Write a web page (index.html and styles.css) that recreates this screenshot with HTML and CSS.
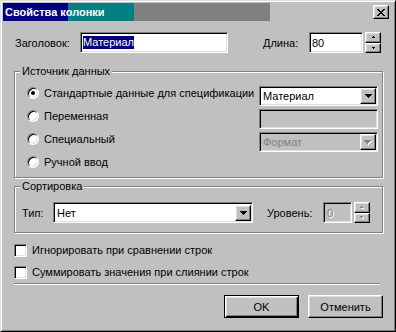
FILE: index.html
```html
<!DOCTYPE html>
<html lang="ru">
<head>
<meta charset="utf-8">
<title>Свойства колонки</title>
<link rel="stylesheet" href="styles.css">
</head>
<body>
<div class="window">
  <div class="titlebar">
    <span class="title">Свойства колонки</span>
    <span class="btn close"><svg width="8" height="7" viewBox="0 0 8 7"><path d="M0 0h2v1H0zM6 0h2v1H6zM1 1h2v1H1zM5 1h2v1H5zM2 2h4v1H2zM3 3h2v1H3zM2 4h4v1H2zM1 5h2v1H1zM5 5h2v1H5zM0 6h2v1H0zM6 6h2v1H6z" fill="#000"/></svg></span>
  </div>
  <div class="body">
    <div class="row">
      <span class="lbl lbl-title">Заголовок:</span>
      <div class="field f-title"><span class="sel">Материал</span></div>
      <span class="lbl lbl-len">Длина:</span>
      <div class="field f-len">80</div>
      <div class="spin">
        <span class="btn sbtn"><svg width="3" height="2" viewBox="0 0 3 2"><path d="M1 0h1v1H1zM0 1h3v1H0z" fill="#000"/></svg></span>
        <span class="btn sbtn"><svg width="3" height="2" viewBox="0 0 3 2"><path d="M0 0h3v1H0zM1 1h1v1H1z" fill="#000"/></svg></span>
      </div>
    </div>

    <fieldset class="group g1">
      <legend>Источник данных</legend>
      <div class="g1-inner">
        <div class="radios">
          <div class="radio-row"><span class="radio on"></span><span>Стандартные данные для спецификации</span></div>
          <div class="radio-row"><span class="radio"></span><span>Переменная</span></div>
          <div class="radio-row"><span class="radio"></span><span>Специальный</span></div>
          <div class="radio-row"><span class="radio"></span><span>Ручной ввод</span></div>
        </div>
        <div class="controls">
          <div class="combo"><span class="combo-text">Материал</span><span class="btn arrow"><svg width="7" height="4" viewBox="0 0 7 4"><path d="M0 0h7v1H0zM1 1h5v1H1zM2 2h3v1H2zM3 3h1v1H3z" fill="#000"/></svg></span></div>
          <div class="field disabled f-var"></div>
          <div class="combo disabled"><span class="combo-text">Формат</span><span class="btn arrow"><svg width="8" height="5" viewBox="0 0 8 5"><path d="M1 1h7v1H1zM2 2h5v1H2zM3 3h3v1H3zM4 4h1v1H4z" fill="#fff"/><path d="M0 0h7v1H0zM1 1h5v1H1zM2 2h3v1H2zM3 3h1v1H3z" fill="#808080"/></svg></span></div>
        </div>
      </div>
    </fieldset>

    <fieldset class="group g2">
      <legend>Сортировка</legend>
      <div class="g2-inner">
        <span class="lbl lbl-type">Тип:</span>
        <div class="combo c-type"><span class="combo-text">Нет</span><span class="btn arrow"><svg width="7" height="4" viewBox="0 0 7 4"><path d="M0 0h7v1H0zM1 1h5v1H1zM2 2h3v1H2zM3 3h1v1H3z" fill="#000"/></svg></span></div>
        <span class="lbl lbl-level">Уровень:</span>
        <div class="field disabled f-level"><span class="dis-text">0</span></div>
        <div class="spin">
          <span class="btn sbtn"><svg width="4" height="3" viewBox="0 0 4 3"><path d="M2 1h1v1H2zM1 2h3v1H1z" fill="#fff"/><path d="M1 0h1v1H1zM0 1h3v1H0z" fill="#808080"/></svg></span>
          <span class="btn sbtn"><svg width="4" height="3" viewBox="0 0 4 3"><path d="M1 1h3v1H1zM2 2h1v1H2z" fill="#fff"/><path d="M0 0h3v1H0zM1 1h1v1H1z" fill="#808080"/></svg></span>
        </div>
      </div>
    </fieldset>

    <div class="checks">
      <div class="check-row"><span class="checkbox"></span><span>Игнорировать при сравнении строк</span></div>
      <div class="check-row"><span class="checkbox"></span><span>Суммировать значения при слиянии строк</span></div>
    </div>

    <div class="sep"></div>

    <div class="buttons">
      <span class="pbtn default">OK</span>
      <span class="btn pbtn">Отменить</span>
    </div>
  </div>
</div>
</body>
</html>
```

FILE: styles.css
```css
* { box-sizing: border-box; }
html, body { margin: 0; padding: 0; }
body {
  font-family: "Liberation Sans", Arial, sans-serif;
  font-size: 11px;
  color: #000;
  background: #c0c0c0;
}
.window {
  width: 396px;
  height: 332px;
  background: #c0c0c0;
  border: 1px solid;
  border-color: #dfdfdf #000 #000 #dfdfdf;
  box-shadow: inset 1px 1px #fff, inset -1px -1px #808080;
  padding: 2px;
}
.titlebar {
  height: 18px;
  display: flex;
  align-items: center;
  justify-content: space-between;
  padding: 0 4px 0 2px;
  background: linear-gradient(90deg, #000080 0 65px, #008080 65px 131px, #808080 131px 267px, transparent 267px);
}
.title {
  color: #fff;
  font-weight: bold;
  font-size: 11px;
}
.btn {
  display: flex;
  align-items: center;
  justify-content: center;
  background: #c0c0c0;
  border: 1px solid;
  border-color: #fff #000 #000 #fff;
  box-shadow: inset -1px -1px #808080, inset 1px 1px #dfdfdf;
}
.close { width: 16px; height: 14px; }

.body { padding: 11px 10px 0 11px; }

.row { display: flex; align-items: center; height: 21px; }
.lbl { white-space: nowrap; }
.lbl-title { margin-left: 1px; width: 65px; }
.lbl-len { margin-left: 35px; width: 46px; }

.field {
  height: 21px;
  background: #fff;
  border: 1px solid;
  border-color: #808080 #fff #fff #808080;
  box-shadow: inset 1px 1px #000, inset -1px -1px #dfdfdf;
  padding: 0 2px;
  display: flex;
  align-items: center;
}
.f-title { width: 148px; }
.f-len { width: 54px; }
.sel { background: #000080; color: #fff; line-height: 13px; }

.spin {
  margin-left: 2px;
  width: 16px;
  height: 21px;
  display: flex;
  flex-direction: column;
}
.sbtn { flex: 1; }

.group {
  margin: 11px 0 0 0;
  padding: 0;
  min-width: 0;
  border: 1px solid #808080;
  box-shadow: inset 1px 1px #fff, 1px 1px #fff;
}
.group legend {
  margin-left: 5px;
  padding: 0 2px;
  line-height: 14px;
  background: #c0c0c0;
}
.g1-inner {
  display: flex;
  padding: 3px 4px 4px 12px;
}
.radios { display: flex; flex-direction: column; }
.radio-row {
  height: 23px;
  display: flex;
  align-items: center;
  gap: 5px;
  white-space: nowrap;
}
.radio {
  width: 12px;
  height: 12px;
  border-radius: 50%;
  background: #fff;
  border: 1px solid;
  border-color: #808080 #fff #fff #808080;
  box-shadow: inset 1px 1px #000, inset -1px -1px #dfdfdf;
  display: flex;
  align-items: center;
  justify-content: center;
}
.radio.on::after {
  content: "";
  width: 4px;
  height: 4px;
  border-radius: 50%;
  background: #000;
}
.controls {
  margin-left: auto;
  margin-top: 5px;
  width: 119px;
  display: flex;
  flex-direction: column;
  gap: 3px;
}
.combo {
  height: 20px;
  background: #fff;
  border: 1px solid;
  border-color: #808080 #fff #fff #808080;
  box-shadow: inset 1px 1px #000, inset -1px -1px #dfdfdf;
  padding: 1px 1px 1px 3px;
  display: flex;
  align-items: center;
}
.combo-text { flex: 1; white-space: nowrap; }
.arrow { width: 16px; height: 16px; }
.f-var { height: 20px; }
.disabled { background: #c0c0c0; color: #808080; }

.g2 { margin-top: 1px; }
.g2-inner {
  display: flex;
  align-items: center;
  padding: 9px 0 9px 7px;
}
.lbl-type { width: 31px; }
.c-type { width: 200px; height: 21px; }
.lbl-level { margin-left: 14px; width: 56px; }
.f-level { width: 29px; padding-left: 3px; }
.dis-text { color: #808080; text-shadow: 1px 1px #fff; }

.checks { margin-top: 6px; }
.check-row {
  height: 22px;
  display: flex;
  align-items: center;
  gap: 5px;
  white-space: nowrap;
}
.checkbox {
  width: 13px;
  height: 13px;
  background: #fff;
  border: 1px solid;
  border-color: #808080 #fff #fff #808080;
  box-shadow: inset 1px 1px #000, inset -1px -1px #dfdfdf;
}
.sep {
  height: 2px;
  border-top: 1px solid #808080;
  border-bottom: 1px solid #fff;
  margin-right: 3px;
}
.buttons {
  display: flex;
  justify-content: flex-end;
  gap: 9px;
  margin-top: 10px;
}
.pbtn { width: 75px; height: 23px; }
.default {
  display: flex;
  align-items: center;
  justify-content: center;
  background: #c0c0c0;
  border: 1px solid #000;
  box-shadow: inset 1px 1px #fff, inset -1px -1px #000, inset 2px 2px #dfdfdf, inset -2px -2px #808080;
}
```
